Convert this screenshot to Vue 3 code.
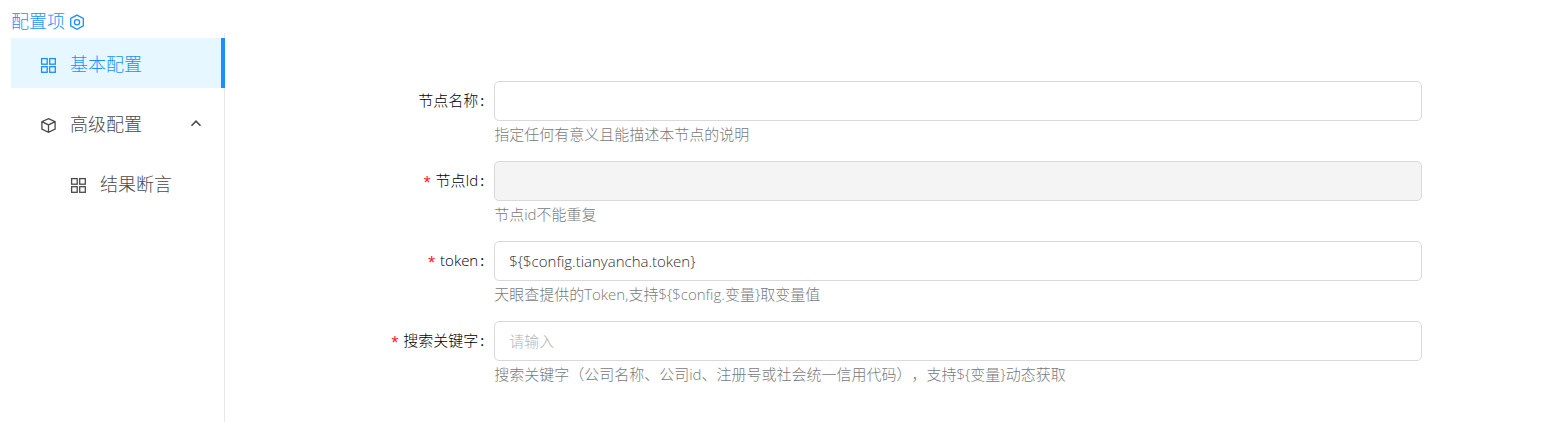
<template>
  <div class="config-page">
    <header class="config-title">
      <span>配置项</span>
      <svg class="icon title-icon" viewBox="0 0 16 16">
        <path d="M8 1.1 L14.3 4.5 V11.9 L8 15.3 L1.7 11.9 V4.5 Z" />
        <circle cx="8" cy="8.2" r="2.6" />
      </svg>
    </header>

    <div class="config-body">
      <!-- 左侧菜单 -->
      <nav class="side-menu">
        <button
          v-for="item in menus"
          :key="item.key"
          type="button"
          class="menu-item"
          :class="{ active: item.key === activeKey, child: item.child }"
          @click="selectMenu(item)"
        >
          <svg v-if="item.icon === 'grid'" class="icon" viewBox="0 0 16 16">
            <rect x="1.6" y="1.6" width="5.6" height="5.6" />
            <rect x="9.7" y="1.6" width="5.6" height="5.6" />
            <rect x="1.6" y="9.7" width="5.6" height="5.6" />
            <rect x="9.7" y="9.7" width="5.6" height="5.6" />
          </svg>
          <svg v-else class="icon" viewBox="0 0 16 16">
            <path d="M8.5 1.6 L15.1 4.6 V12.2 L8.5 15.3 L1.9 12.2 V4.6 Z M1.9 4.6 L8.5 7.9 L15.1 4.6 M8.5 7.9 V15.3" />
          </svg>
          <span class="menu-text">{{ item.title }}</span>
          <svg v-if="item.arrow" class="arrow" :class="{ closed: !opened }" viewBox="0 0 12 12">
            <path d="M1.5 8.8 L6 4.2 L10.5 8.8" />
          </svg>
        </button>
      </nav>

      <!-- 表单 -->
      <form class="config-form" @submit.prevent>
        <div v-for="field in fields" :key="field.id" class="form-item">
          <label :for="field.id" class="form-label">
            <span v-if="field.required" class="required">*</span>
            <span>{{ field.label }}</span>
            <span class="colon">:</span>
          </label>
          <div class="form-control">
            <input
              :id="field.id"
              v-model="field.value"
              type="text"
              :placeholder="field.placeholder"
              :disabled="field.disabled"
            />
            <div class="form-help">{{ field.help }}</div>
          </div>
        </div>
      </form>
    </div>
  </div>
</template>

<script setup>
import { computed, reactive, ref } from 'vue'

const activeKey = ref('basic')
const opened = ref(true)

const allMenus = [
  { key: 'basic', title: '基本配置', icon: 'grid' },
  { key: 'advanced', title: '高级配置', icon: 'box', arrow: true },
  { key: 'assert', title: '结果断言', icon: 'grid', child: true }
]
const menus = computed(() => allMenus.filter(item => opened.value || !item.child))

const fields = reactive([
  {
    id: 'nodeName',
    label: '节点名称',
    value: '',
    help: '指定任何有意义且能描述本节点的说明'
  },
  {
    id: 'nodeId',
    label: '节点Id',
    value: '',
    required: true,
    disabled: true,
    help: '节点id不能重复'
  },
  {
    id: 'token',
    label: 'token',
    value: '${$config.tianyancha.token}',
    required: true,
    help: '天眼查提供的Token,支持${$config.变量}取变量值'
  },
  {
    id: 'keyword',
    label: '搜索关键字',
    value: '',
    required: true,
    placeholder: '请输入',
    help: '搜索关键字（公司名称、公司id、注册号或社会统一信用代码），支持${变量}动态获取'
  }
])

const selectMenu = (item) => {
  if (item.arrow) {
    opened.value = !opened.value
    return
  }
  activeKey.value = item.key
}
</script>

<style>
body {
  margin: 0;
  background: #fff;
}
</style>

<style scoped>
.config-page {
  display: flex;
  flex-direction: column;
  min-height: 100vh;
  padding-left: 11px;
  box-sizing: border-box;
  font-family: "Open Sans", "Noto Sans CJK SC", sans-serif;
  font-weight: 300;
  font-size: 15px;
  color: #000;
  text-spacing-trim: space-all;
}

.config-title {
  display: flex;
  align-items: center;
  gap: 4px;
  height: 33px;
  padding-top: 6px;
  box-sizing: border-box;
  color: #1890ff;
  font-size: 18px;
}

.icon {
  flex: none;
  width: 16px;
  height: 16px;
  margin-top: 4px;
  fill: none;
  stroke: currentColor;
  stroke-width: 1.3;
}

.config-body {
  display: flex;
  flex: 1;
}

.side-menu {
  display: flex;
  flex: none;
  flex-direction: column;
  gap: 10px;
  width: 214px;
  padding-top: 5px;
  box-sizing: border-box;
  border-right: 1px solid #e8e8e8;
}

.menu-item {
  display: flex;
  align-items: center;
  gap: 14px;
  height: 50px;
  margin: 0 -1px 0 0;
  padding: 0 19px 0 29px;
  border: none;
  border-right: 4px solid transparent;
  background: none;
  background-clip: padding-box;
  color: #4a4a4a;
  font: inherit;
  font-size: 18px;
  text-align: left;
  cursor: pointer;
}

.menu-item.child {
  padding-left: 59px;
}

.menu-item.active {
  border-right-color: #1890ff;
  background-color: #e6f7ff;
  color: #1890ff;
}

.menu-text {
  flex: 1;
}

.arrow {
  width: 12px;
  height: 12px;
  fill: none;
  stroke: currentColor;
  stroke-width: 1.6;
}

.arrow.closed {
  transform: rotate(180deg);
}

.config-form {
  flex: 1;
  min-width: 0;
  padding: 48px 0 20px 4px;
}

.form-item {
  display: grid;
  grid-template-columns: 20% 70%;
  height: 80px;
}

.form-label {
  display: flex;
  align-items: center;
  justify-content: flex-end;
  height: 37px;
  padding-right: 10px;
  white-space: nowrap;
}

.required {
  margin-right: 3px;
  padding-top: 8px;
  color: #f5222d;
  font-family: "Liberation Mono", monospace;
  font-size: 18px;
  font-weight: 400;
}

.colon {
  margin-left: 2px;
  font-weight: 400;
}

.form-control input {
  display: block;
  width: 100%;
  height: 40px;
  padding: 0 14px;
  box-sizing: border-box;
  border: 1px solid #d9d9d9;
  border-radius: 5px;
  outline: none;
  background: #fff;
  color: #333;
  font: inherit;
}

.form-control input:focus {
  border-color: #40a9ff;
}

.form-control input:disabled {
  background: #f4f4f4;
  cursor: not-allowed;
}

.form-control input::placeholder {
  color: #b4b4b4;
}

.form-help {
  color: #7a7a7a;
  line-height: 26px;
}
</style>
